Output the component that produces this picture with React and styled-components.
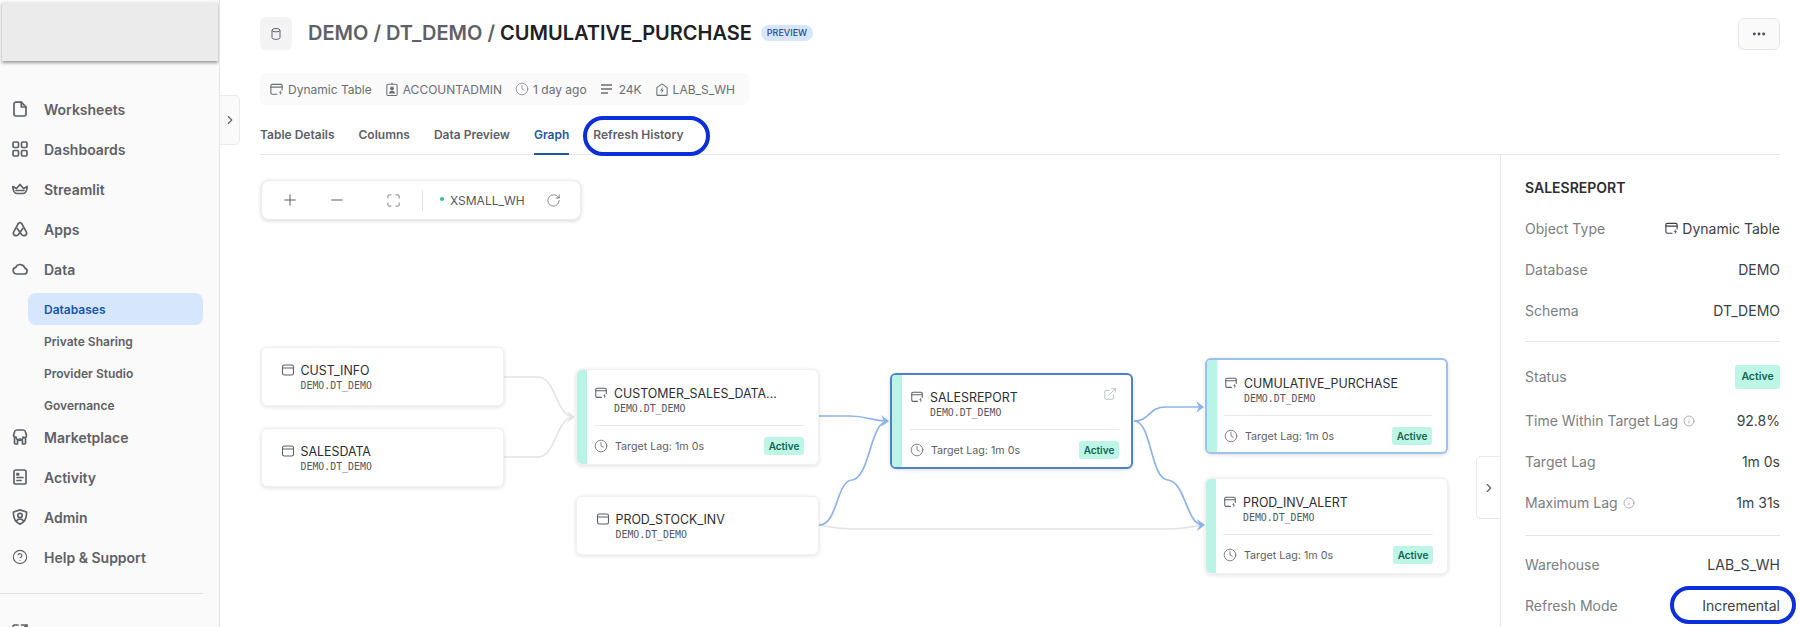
import React from 'react';
import styled, { createGlobalStyle } from 'styled-components';
import { Plus, Minus, Maximize, RotateCw, Clock, ExternalLink, Info, ChevronRight, Ellipsis, CircleHelp } from 'lucide-react';

const Global = createGlobalStyle`
  html, body { margin: 0; padding: 0; background: #fff; }
  body { font-family: Inter, "Noto Sans", sans-serif; color: #1e2024; }
  * { box-sizing: border-box; }
`;

const Page = styled.div`
  display: flex;
  width: 1800px;
  height: 627px;
  overflow: hidden;
  position: relative;
`;

/* Sidebar */
const Sidebar = styled.aside`
  width: 220px;
  flex: none;
  height: 627px;
  background: #fafafa;
  border-right: 1px solid #e4e5e7;
  overflow: hidden;
  display: flex;
  flex-direction: column;
`;
const BrandBlock = styled.div`
  height: 59px;
  margin: 2px 1px 28px 2px;
  flex: none;
  background: #ebebeb;
  box-shadow: 0 2px 3px rgba(0, 0, 0, 0.38);
`;
const NavItem = styled.div`
  height: 40px;
  flex: none;
  display: flex;
  align-items: center;
  gap: 16px;
  padding-left: 12px;
  color: #5e6166;
  font-size: 14px;
  font-weight: 600;
  svg { width: 16px; height: 16px; flex: none; fill: none; stroke: currentColor; stroke-width: 1.7; stroke-linecap: round; stroke-linejoin: round; }
`;
const SubList = styled.div`
  flex: none;
  padding-top: 4px;
  margin-bottom: -4px;
  display: flex;
  flex-direction: column;
`;
const SubItem = styled.div`
  height: 32px;
  width: 175px;
  margin-left: 28px;
  padding-left: 16px;
  display: flex;
  align-items: center;
  border-radius: 8px;
  font-size: 12px;
  font-weight: 600;
  color: ${p => (p.$active ? '#1a56ac' : '#5e6166')};
  background: ${p => (p.$active ? '#d6e6fd' : 'transparent')};
`;
const SideRule = styled.div`
  height: 1px;
  width: 203px;
  flex: none;
  margin: 16px 0 18px;
  background: #e1e2e4;
`;
const SideToggle = styled.div`
  position: absolute;
  left: 220px;
  top: 95px;
  width: 20px;
  height: 50px;
  background: #fafafa;
  border: 1px solid #e8e9eb;
  border-left: none;
  border-radius: 0 5px 5px 0;
  display: flex;
  align-items: center;
  justify-content: center;
  color: #5e6166;
`;

/* Main */
const Main = styled.main`
  flex: 1;
  min-width: 0;
  padding: 17px 20px 0 40px;
  display: flex;
  flex-direction: column;
  position: relative;
`;
const Header = styled.header`
  height: 33px;
  flex: none;
  display: flex;
  align-items: center;
`;
const HeaderIcon = styled.div`
  width: 32px;
  height: 33px;
  flex: none;
  border-radius: 6px;
  background: #f3f3f4;
  display: flex;
  align-items: center;
  justify-content: center;
  color: #5e6166;
  margin-right: 16px;
`;
const Title = styled.h1`
  margin: 0 0 2px;
  font-size: 20px;
  font-weight: 600;
  color: #5e6166;
  white-space: nowrap;
`;
const TitleStrong = styled.span`
  color: #1e2024;
`;
const PreviewBadge = styled.span`
  margin: 0 0 2px 9px;
  width: 52px;
  height: 16px;
  border-radius: 8px;
  background: #d6e6fd;
  color: #1d4f98;
  font-size: 9px;
  font-weight: 500;
  display: flex;
  align-items: center;
  justify-content: center;
`;
const MoreButton = styled.div`
  margin-left: auto;
  width: 42px;
  height: 32px;
  border: 1px solid #e4e5e7;
  border-radius: 6px;
  background: #fafafa;
  display: flex;
  align-items: center;
  justify-content: center;
  color: #4a4d52;
`;
const MetaBar = styled.div`
  margin-top: 23px;
  width: 489px;
  height: 32px;
  flex: none;
  border-radius: 6px;
  background: #fafafa;
  padding-left: 9px;
  display: flex;
  align-items: center;
  color: #6b6e73;
  font-size: 12px;
  white-space: nowrap;
`;
const MetaItem = styled.div`
  display: flex;
  align-items: center;
  gap: ${p => p.$gap || 4}px;
  margin-right: ${p => p.$mr ?? 13}px;
  svg { flex: none; }
`;
const Tabs = styled.nav`
  height: 50px;
  flex: none;
  display: flex;
  align-items: stretch;
  gap: 24px;
  border-bottom: 1px solid #e3e4e6;
`;
const Tab = styled.div`
  position: relative;
  padding-top: 22px;
  font-size: 12px;
  line-height: 16px;
  font-weight: 600;
  color: ${p => (p.$active ? '#1d5a9c' : '#5e6166')};
  margin-bottom: -1px;
  border-bottom: 2px solid ${p => (p.$active ? '#1d5a9c' : 'transparent')};
`;
const Callout = styled.span`
  position: absolute;
  border: 4px solid #0b2fd8;
  border-radius: 20px;
  pointer-events: none;
`;
const TabCallout = styled(Callout)`
  left: -10px;
  top: 11px;
  width: 127px;
  height: 40px;
`;

const Body = styled.div`
  flex: 1;
  min-height: 0;
  display: flex;
`;
const Canvas = styled.div`
  width: 1240px;
  height: 472px;
  flex: none;
  position: relative;
`;
const Edges = styled.svg`
  position: absolute;
  left: 0;
  top: 0;
`;
const Toolbar = styled.div`
  position: absolute;
  left: 1px;
  top: 25px;
  width: 320px;
  height: 40px;
  background: #fff;
  border: 1px solid #eceded;
  border-radius: 8px;
  box-shadow: 0 1px 4px rgba(0, 0, 0, 0.16);
  color: #55585d;
  font-size: 12px;
`;
const ToolSlot = styled.span`
  position: absolute;
  top: 0;
  height: 38px;
  left: ${p => p.$x}px;
  display: flex;
  align-items: center;
  gap: ${p => p.$gap || 0}px;
  white-space: nowrap;
`;
const ToolRule = styled.span`
  position: absolute;
  left: 160px;
  top: 9px;
  width: 1px;
  height: 21px;
  background: #e3e4e6;
`;
const Dot = styled.span`
  width: 4px;
  height: 4px;
  border-radius: 50%;
  background: #33bf97;
  margin-top: -2px;
`;

const Card = styled.div`
  position: absolute;
  left: ${p => p.$x - 260}px;
  top: ${p => p.$y - 155}px;
  width: 243px;
  height: ${p => p.$h}px;
  background: #fff;
  border-radius: 6px;
  border: ${p => (p.$sel === 'strong' ? '2px solid #4c82c9' : p.$sel === 'soft' ? '2px solid #9dc1ef' : '1px solid #f1f1f2')};
  box-shadow: 0 1px 4px rgba(0, 0, 0, 0.13);
  overflow: hidden;
  display: flex;
`;
const CardBar = styled.div`
  width: 10px;
  flex: none;
  background: #b9f4e6;
`;
const CardBody = styled.div`
  flex: 1;
  min-width: 0;
  padding: ${p => (p.$simple ? '14px 14px 0 18.5px' : p.$tight ? '14px 12px 0 8px' : '15px 14px 0 7px')};
  position: relative;
`;
const NameRow = styled.div`
  display: flex;
  align-items: center;
  gap: 6px;
  height: 16px;
  font-size: 12.4px;
  color: #2c2e33;
  white-space: nowrap;
  svg { flex: none; color: #5e6166; }
`;
const Path = styled.div`
  margin: 1px 0 0 20px;
  height: 14px;
  line-height: 14px;
  font-family: "DejaVu Sans Mono", "Liberation Mono", monospace;
  font-size: 9.9px;
  color: #55585d;
`;
const CardRule = styled.div`
  height: 1px;
  background: #e9eaeb;
  margin-top: 9px;
`;
const CardFoot = styled.div`
  height: 40px;
  display: flex;
  align-items: center;
  gap: 7px;
  font-size: 10.7px;
  color: #5e6166;
  svg { flex: none; }
`;
const Badge = styled.span`
  margin-left: auto;
  background: #bdf5e7;
  color: #0f6650;
  border-radius: 3px;
  font-weight: 600;
  display: flex;
  align-items: center;
  justify-content: center;
  width: ${p => (p.$big ? 45 : 40)}px;
  height: ${p => (p.$big ? 24 : 18)}px;
  font-size: ${p => (p.$big ? 10.5 : 10)}px;
`;
const CardLink = styled.span`
  position: absolute;
  right: 14px;
  top: 10px;
  color: #a0a2a6;
`;
const CanvasToggle = styled.div`
  position: absolute;
  right: 0;
  top: 301px;
  width: 24px;
  height: 63px;
  border: 1px solid #e8e9eb;
  border-right: none;
  border-radius: 5px 0 0 5px;
  background: #fff;
  display: flex;
  align-items: center;
  justify-content: center;
  color: #5e6166;
`;

/* Panel */
const Panel = styled.section`
  width: 280px;
  flex: none;
  border-left: 1px solid #e3e4e6;
  padding: 23px 0 0 24px;
`;
const PanelTitle = styled.div`
  height: 20px;
  line-height: 20px;
  font-size: 14px;
  font-weight: 600;
  color: #2c2e33;
  margin-bottom: 10px;
`;
const Row = styled.div`
  height: 41px;
  margin-bottom: ${p => p.$mb || 0}px;
  display: flex;
  align-items: center;
  justify-content: space-between;
  font-size: 14px;
  color: #7b7e83;
  position: relative;
`;
const RowLabel = styled.span`
  display: flex;
  align-items: center;
  gap: 5px;
`;
const RowValue = styled.span`
  display: flex;
  align-items: center;
  gap: 3px;
  color: #3c3f44;
`;
const PanelRule = styled.div`
  height: 1px;
  background: #e3e4e6;
  margin: ${p => p.$m};
`;
const ModeCallout = styled(Callout)`
  right: -16px;
  top: 1px;
  width: 126px;
  height: 38px;
`;

/* Drawn icons */
const DynIcon = ({ s = 16 }) => (
  <svg width={s} height={s} viewBox="0 0 16 16" fill="none" stroke="currentColor" strokeWidth="1.2" strokeLinecap="round" strokeLinejoin="round">
    <path d="M14 8.500V4a1.500 1.500 0 0 0-1.500-1.500h-9A1.500 1.500 0 0 0 2 4v7.500A1.500 1.500 0 0 0 3.500 13H8.500" />
    <path d="M2 5.500h12" />
    <path d="M12.800 8.500l-2.300 3h1.500l-.6 2.800 2.400-3.300h-1.500z" fill="currentColor" stroke="none" />
  </svg>
);
const TableIcon = () => (
  <svg width="14" height="14" viewBox="0 0 14 14" fill="none" stroke="currentColor" strokeWidth="1.1">
    <rect x="1.500" y="2" width="11" height="10" rx="1.800" />
    <path d="M1.500 5h11" />
  </svg>
);
const Cylinder = () => (
  <svg width="14" height="14" viewBox="0 0 14 14" fill="none" stroke="currentColor" strokeWidth="1">
    <ellipse cx="7" cy="3.200" rx="4" ry="1.700" />
    <path d="M3 3.200v7.400c0 1 1.800 1.800 4 1.800s4-.8 4-1.800V3.200" />
  </svg>
);
const RoleIcon = () => (
  <svg width="14" height="16" viewBox="0 0 15 16" fill="none" stroke="currentColor" strokeWidth="1.100">
    <rect x="2" y="3" width="11" height="12" rx="1.500" />
    <path d="M7.500 1v2" />
    <circle cx="7.500" cy="7.500" r="1.500" fill="currentColor" />
    <path d="M4.800 12.300c.4-1.500 1.400-2 2.700-2s2.300.5 2.700 2z" fill="currentColor" />
  </svg>
);
const RowsIcon = () => (
  <svg width="13" height="14" viewBox="0 0 13 14" fill="none" stroke="currentColor" strokeWidth="1.600">
    <path d="M1 3h11M1 7h11M1 11h7" />
  </svg>
);
const WhIcon = () => (
  <svg width="14" height="15" viewBox="0 0 15 15" fill="none" stroke="currentColor" strokeWidth="1.100" strokeLinejoin="round">
    <path d="M2 5.500 7.500 1.500 13 5.500V13a.8.8 0 0 1-.8.8H2.800A.8.8 0 0 1 2 13z" />
    <path d="M8.200 4.800 5.600 8.600h1.700l-.5 3 2.600-3.900H7.700z" fill="currentColor" stroke="none" />
  </svg>
);

const navIcons = {
  sheet: <svg viewBox="0 0 16 16"><path d="M2 3a1.800 1.800 0 0 1 1.800-1.800h5.500L14 6v7.200a1.800 1.800 0 0 1-1.800 1.800H3.800A1.800 1.800 0 0 1 2 13.200z" /><path d="M9.300 1.200V6H14" /></svg>,
  dash: <svg viewBox="0 0 16 16"><rect x="1" y="1" width="5.500" height="5.500" rx="1.200" /><rect x="9.500" y="1" width="5.500" height="5.500" rx="1.200" /><rect x="1" y="9.500" width="5.500" height="5.500" rx="1.200" /><rect x="9.500" y="9.500" width="5.500" height="5.500" rx="1.200" /></svg>,
  crown: <svg viewBox="0 0 16 16"><path d="M.8 5.500 4.500 7.500 8 3.500l3.500 4 3.700-2c-.2 3.500-1.700 7-4 7h-6.400c-2.300 0-3.800-3.500-4-7z" /><path d="M4 9.500h8" /></svg>,
  apps: <svg viewBox="0 0 16 16"><path d="M6.100 2.800c.8-1.500 3-1.500 3.800 0l4.400 8c1 1.900-.3 3.900-2.300 3.900-1 0-1.800-.5-2.400-1.300L5.200 7.500" /><path d="M6.100 2.800 1.700 10.800c-1 1.900.3 3.900 2.300 3.900 1 0 1.800-.5 2.400-1.300L10.800 7.500" /></svg>,
  cloud: <svg viewBox="0 0 16 16"><path d="M4.200 13h8a3 3 0 0 0 .6-5.900 4.800 4.800 0 0 0-9-.8A3.400 3.400 0 0 0 4.200 13z" /></svg>,
  store: <svg viewBox="0 0 16 16"><path d="M1.500 6.500 2.500 3a2.500 2.500 0 0 1 2.400-2h6.200a2.500 2.500 0 0 1 2.400 2l1 3.500a2 2 0 0 1-3.400 1.500 2.400 2.400 0 0 1-7 0A2 2 0 0 1 1.500 6.500z" /><path d="M2.500 8.500V14a1 1 0 0 0 1 1H5.500v-2.500a2.500 2.500 0 0 1 5 0V15h2a1 1 0 0 0 1-1V8.500" /></svg>,
  activity: <svg viewBox="0 0 16 16"><rect x="2" y="1" width="12" height="14" rx="1.800" /><path d="M5 4.500h1.500v1.500H5zM5 8.500h6M5 11.500h4" /></svg>,
  admin: <svg viewBox="0 0 16 16"><path d="M8 .9 14.500 3c.4 5.500-1.600 10-6.500 12.100C3.100 13 1.100 8.500 1.500 3z" /><circle cx="8" cy="6.500" r="2.200" /><path d="M4.500 12c.8-1.500 2-2 3.500-2s2.700.5 3.500 2" /></svg>,
  classic: <svg viewBox="0 0 16 16"><path d="M6 1H2.500A1.500 1.500 0 0 0 1 2.500v11A1.500 1.500 0 0 0 2.500 15h11a1.500 1.500 0 0 0 1.500-1.500V10" /><path d="M9.500 1H15v5.500M15 1 8 8" /></svg>,
};

const BLUE = '#8db4ea';
const GREY = '#e4e4e5';

const nodes = [
  { id: 'a', x: 261, y: 347, name: 'CUST_INFO' },
  { id: 'b', x: 261, y: 428, name: 'SALESDATA', cyl: true },
  { id: 'c', x: 576, y: 369, name: 'CUSTOMER_SALES_DATA...', dyn: true },
  { id: 'd', x: 576, y: 496, name: 'PROD_STOCK_INV', cyl: true },
  { id: 'e', x: 890, y: 373, name: 'SALESREPORT', dyn: true, sel: 'strong', link: true },
  { id: 'f', x: 1205, y: 358, name: 'CUMULATIVE_PURCHASE', dyn: true, sel: 'soft' },
  { id: 'g', x: 1205, y: 478, name: 'PROD_INV_ALERT', dyn: true },
];

const GraphNode = ({ n }) => (
  <Card $x={n.x} $y={n.y} $h={n.dyn ? 96 : 59} $sel={n.sel}>
    {n.dyn && <CardBar />}
    <CardBody $simple={!n.dyn} $tight={n.sel === 'strong'}>
      <NameRow>
        {n.dyn ? <DynIcon s={14} /> : <TableIcon />}
        {n.name}
      </NameRow>
      <Path>DEMO.DT_DEMO</Path>
      {n.link && <CardLink><ExternalLink size={14} strokeWidth={1.1} /></CardLink>}
      {n.dyn && (
        <>
          <CardRule />
          <CardFoot>
            <Clock size={14} strokeWidth={1.3} />
            Target Lag: 1m 0s
            <Badge>Active</Badge>
          </CardFoot>
        </>
      )}
    </CardBody>
  </Card>
);

const Arrow = ({ x, y, c }) => <path d={`M${x - 8} ${y - 6}L${x} ${y}L${x - 8} ${y + 6}L${x - 5} ${y}Z`} fill={c} />;

const Graph = () => (
  <Edges width="1240" height="472" viewBox="260 155 1240 472" fill="none" strokeWidth="1.700">
    <g stroke={GREY}>
      <path d="M504 377H538C556 377 556 417 574 417" />
      <path d="M504 457H538C556 457 556 417 574 417" />
      <path d="M819 525C832 527 836 529 852 529H1168C1184 529 1190 527 1203 525" />
    </g>
    <Arrow x={575} y={417} c={GREY} />
    <Arrow x={1204} y={525} c={GREY} />
    <g stroke={BLUE}>
      <path d="M819 416H850C868 416 870 421 888 421" />
      <path d="M819 525C838 525 836 481 852 480C870 478 870 421 888 421" />
      <path d="M1134 421C1150 421 1148 407 1166 407H1203" />
      <path d="M1134 421C1152 421 1150 479 1168 480C1186 482 1186 525 1203 525" />
    </g>
    <Arrow x={889} y={421} c={BLUE} />
    <Arrow x={1204} y={407} c={BLUE} />
    <Arrow x={1205} y={525} c={BLUE} />
  </Edges>
);

const navTop = [['sheet', 'Worksheets'], ['dash', 'Dashboards'], ['crown', 'Streamlit'], ['apps', 'Apps'], ['cloud', 'Data']];
const navBottom = [['store', 'Marketplace'], ['activity', 'Activity'], ['admin', 'Admin']];

export default function App() {
  return (
    <Page>
      <Global />
      <Sidebar>
        <BrandBlock />
        {navTop.map(([k, t]) => <NavItem key={t}>{navIcons[k]}{t}</NavItem>)}
        <SubList>
          <SubItem $active>Databases</SubItem>
          <SubItem>Private Sharing</SubItem>
          <SubItem>Provider Studio</SubItem>
          <SubItem>Governance</SubItem>
        </SubList>
        {navBottom.map(([k, t]) => <NavItem key={t}>{navIcons[k]}{t}</NavItem>)}
        <NavItem><CircleHelp strokeWidth={1.7} />Help &amp; Support</NavItem>
        <SideRule />
        <NavItem>{navIcons.classic}Classic Console</NavItem>
      </Sidebar>
      <SideToggle><ChevronRight size={14} strokeWidth={2} /></SideToggle>
      <Main>
        <Header>
          <HeaderIcon><Cylinder /></HeaderIcon>
          <Title>DEMO / DT_DEMO / <TitleStrong>CUMULATIVE_PURCHASE</TitleStrong></Title>
          <PreviewBadge>PREVIEW</PreviewBadge>
          <MoreButton><Ellipsis size={16} strokeWidth={2.4} /></MoreButton>
        </Header>
        <MetaBar>
          <MetaItem><DynIcon s={15} />Dynamic Table</MetaItem>
          <MetaItem><RoleIcon />ACCOUNTADMIN</MetaItem>
          <MetaItem><Clock size={14} strokeWidth={1.100} />1 day ago</MetaItem>
          <MetaItem $gap={6}><RowsIcon />24K</MetaItem>
          <MetaItem $mr={0}><WhIcon />LAB_S_WH</MetaItem>
        </MetaBar>
        <Tabs>
          <Tab>Table Details</Tab>
          <Tab>Columns</Tab>
          <Tab>Data Preview</Tab>
          <Tab $active>Graph</Tab>
          <Tab>Refresh History<TabCallout /></Tab>
        </Tabs>
        <Body>
          <Canvas>
            <Graph />
            <Toolbar>
              <ToolSlot $x={19}><Plus size={18} strokeWidth={1.300} /></ToolSlot>
              <ToolSlot $x={66}><Minus size={18} strokeWidth={1.300} /></ToolSlot>
              <ToolSlot $x={124}><Maximize size={15} strokeWidth={1.200} /></ToolSlot>
              <ToolRule />
              <ToolSlot $x={178} $gap={6}><Dot />XSMALL_WH</ToolSlot>
              <ToolSlot $x={284}><RotateCw size={15} strokeWidth={1.100} /></ToolSlot>
            </Toolbar>
            {nodes.map(n => <GraphNode key={n.id} n={n} />)}
            <CanvasToggle><ChevronRight size={14} strokeWidth={2} /></CanvasToggle>
          </Canvas>
          <Panel>
            <PanelTitle>SALESREPORT</PanelTitle>
            <Row><RowLabel>Object Type</RowLabel><RowValue><DynIcon s={15} />Dynamic Table</RowValue></Row>
            <Row><RowLabel>Database</RowLabel><RowValue>DEMO</RowValue></Row>
            <Row><RowLabel>Schema</RowLabel><RowValue>DT_DEMO</RowValue></Row>
            <PanelRule $m="10px 0 14px" />
            <Row $mb={3}><RowLabel>Status</RowLabel><Badge $big>Active</Badge></Row>
            <Row><RowLabel>Time Within Target Lag <Info size={12} strokeWidth={1.200} /></RowLabel><RowValue>92.8%</RowValue></Row>
            <Row><RowLabel>Target Lag</RowLabel><RowValue>1m 0s</RowValue></Row>
            <Row><RowLabel>Maximum Lag <Info size={12} strokeWidth={1.200} /></RowLabel><RowValue>1m 31s</RowValue></Row>
            <PanelRule $m="12px 0 8px" />
            <Row><RowLabel>Warehouse</RowLabel><RowValue>LAB_S_WH</RowValue></Row>
            <Row><RowLabel>Refresh Mode</RowLabel><RowValue>Incremental</RowValue><ModeCallout /></Row>
          </Panel>
        </Body>
      </Main>
    </Page>
  );
}
